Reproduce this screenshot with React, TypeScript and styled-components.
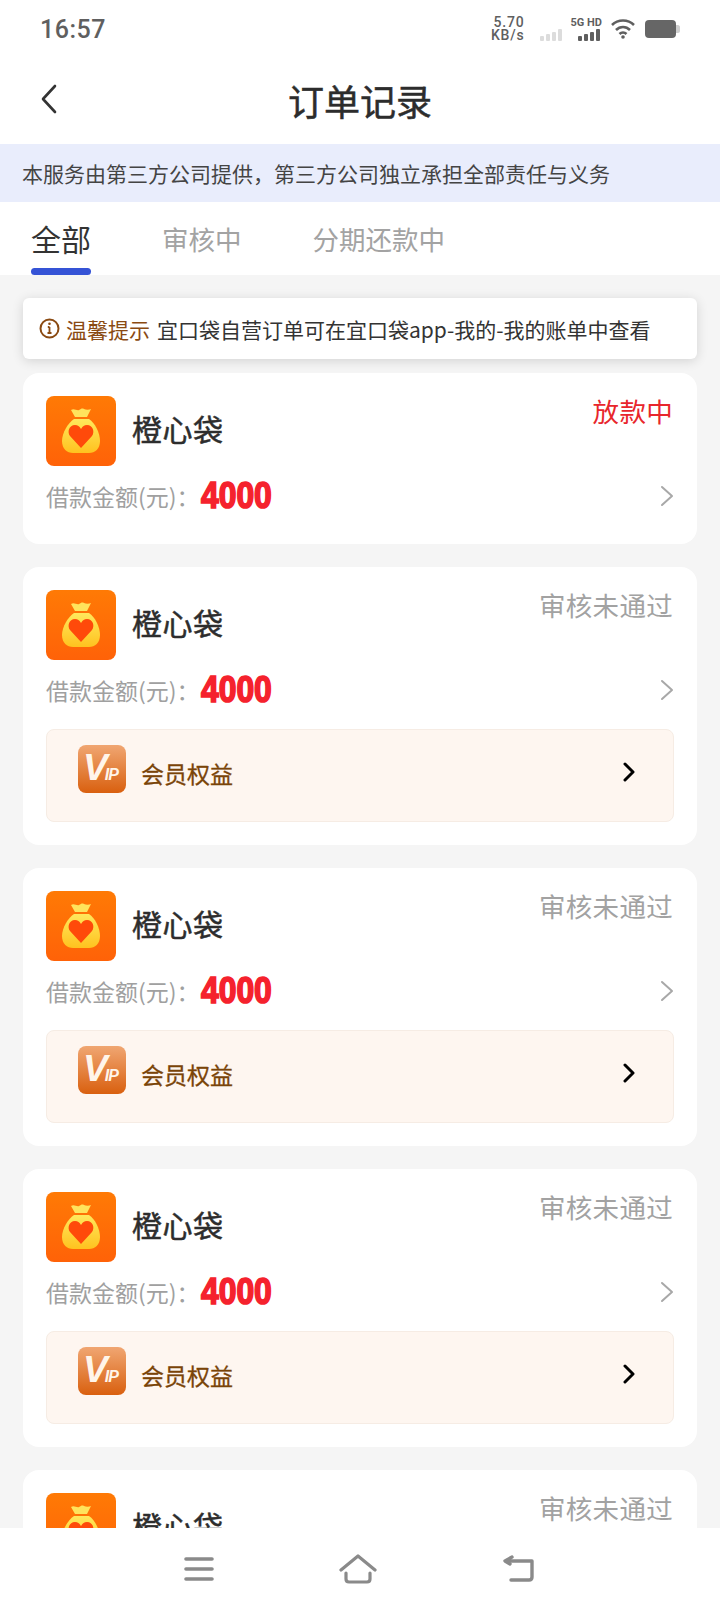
import React from "react";
import styled, { createGlobalStyle } from "styled-components";

const GlobalStyle = createGlobalStyle`
  html, body {
    margin: 0;
    padding: 0;
    background: #f5f5f5;
    font-family: "Noto Sans CJK SC", "Noto Sans", sans-serif;
  }
`;

const Page = styled.div`
  position: relative;
  width: 720px;
  height: 1612px;
  overflow: hidden;
  background: #f5f5f5;
`;
const StatusBar = styled.div`
  height: 58px;
  background: white;
  padding: 0 40px;
  display: flex;
  justify-content: space-between;
  align-items: center;
  box-sizing: border-box;
`;
const Clock = styled.div`
  font-family: Roboto, sans-serif;
  font-size: 25px;
  font-weight: 500;
  letter-spacing: 0.5px;
  color: #5f5f5f;
`;
const StatusIcons = styled.div`
  display: flex;
  align-items: center;
  color: #5f5f5f;
`;
const Speed = styled.div`
  font-family: Roboto, sans-serif;
  font-size: 14px;
  line-height: 13px;
  text-align: right;
  letter-spacing: 0.8px;
  font-weight: 500;
  margin-right: 15px;
`;
const DimSignal = styled.svg`
  margin-top: 11px;
`;
const SignalBox = styled.div`
  display: flex;
  flex-direction: column;
  align-items: flex-end;
  margin-left: 7px;
  margin-right: 9px;
`;
const SignalLabel = styled.div`
  font-family: Roboto, sans-serif;
  font-size: 11px;
  line-height: 12px;
  font-weight: 700;
  white-space: nowrap;
`;
const Battery = styled.svg`
  margin-left: 9px;
`;
const Header = styled.div`
  position: relative;
  height: 86px;
  background: white;
  display: flex;
  align-items: center;
  justify-content: center;
`;
const BackIcon = styled.svg`
  position: absolute;
  left: 40px;
  top: 26px;
`;
const Title = styled.div`
  font-size: 36px;
  font-weight: 400;
  -webkit-text-stroke: 0.5px #2c2c2c;
  color: #2c2c2c;
  line-height: 48px;
  margin-top: -3px;
`;
const Banner = styled.div`
  height: 58px;
  background: #e9edfc;
  color: #444;
  font-size: 21px;
  line-height: 58px;
  padding-left: 22px;
`;
const Tabs = styled.div`
  height: 73px;
  background: white;
  display: flex;
  padding-left: 31px;
  gap: 71px;
`;
const Tab = styled.div<{ $active?: boolean }>`
  position: relative;
  font-size: ${(p) => (p.$active ? "30px" : "26.500px")};
  line-height: 73px;
  height: 73px;
  color: ${(p) => (p.$active ? "#333" : "#a3a3a3")};
  &::after {
    content: "";
    display: ${(p) => (p.$active ? "block" : "none")};
    position: absolute;
    left: 0;
    right: 0;
    bottom: 0;
    height: 7px;
    border-radius: 4px;
    background: #3553d6;
  }
`;
const Content = styled.div`
  padding: 23px 23px 0;
  display: flex;
  flex-direction: column;
`;
const Notice = styled.div`
  height: 61px;
  background: white;
  border-radius: 6px;
  box-shadow: 0 2px 12px rgba(0, 0, 0, 0.14);
  display: flex;
  align-items: center;
  padding-left: 16px;
  font-size: 21px;
  color: #333;
  white-space: nowrap;
  margin-bottom: 14px;
`;
const NoticeLabel = styled.span`
  color: #8a4a12;
  margin: 0 7px 0 6px;
`;
const Card = styled.div<{ $vip?: boolean }>`
  background: white;
  border-radius: 16px;
  padding: 23px 23px ${(p) => (p.$vip ? "23px" : "28px")};
  margin-bottom: 23px;
`;
const CardTop = styled.div`
  display: flex;
  align-items: flex-start;
`;
const LogoBox = styled.svg`
  width: 70px;
  height: 70px;
  flex: none;
`;
const Name = styled.div`
  font-size: 30px;
  font-weight: 400;
  -webkit-text-stroke: 0.5px #2d2d2d;
  color: #2d2d2d;
  line-height: 64px;
  margin-left: 16px;
  flex: 1;
  letter-spacing: 0.5px;
`;
const Status = styled.div<{ $red?: boolean }>`
  font-size: 26.500px;
  line-height: 32px;
  letter-spacing: 0.3px;
  margin-top: -1px;
  margin-right: 1px;
  color: ${(p) => (p.$red ? "#e8262c" : "#a2a2a2")};
`;
const AmountRow = styled.div`
  display: flex;
  align-items: center;
  height: 40px;
  margin-top: 10px;
`;
const AmountLabel = styled.span`
  font-size: 23px;
  color: #a0a0a0;
`;
const Amount = styled.span`
  font-family: "Liberation Sans", sans-serif;
  font-size: 37px;
  font-weight: 700;
  color: #f5222d;
  -webkit-text-stroke: 1.700px #f5222d;
  margin-left: 1px;
  flex: 1;
  transform: scaleX(0.86);
  transform-origin: left center;
`;
const Chevron = styled.svg`
  flex: none;
`;
const VipChevron = styled.svg`
  flex: none;
  margin-bottom: 7px;
`;
const Vip = styled.div`
  height: 93px;
  margin: 19px 0 0;
  box-sizing: border-box;
  background: #fef6f0;
  border: 1px solid #f6ece4;
  border-radius: 8px;
  display: flex;
  align-items: center;
  padding: 0 37px 0 31px;
`;
const VipBadge = styled.div`
  width: 48px;
  height: 48px;
  box-sizing: border-box;
  padding-left: 5px;
  border-radius: 8px;
  background: linear-gradient(180deg, #f0a672, #d9600f);
  flex: none;
  color: #fff5ea;
  font-family: "Liberation Sans", sans-serif;
  font-style: italic;
  font-weight: 700;
  display: flex;
  align-items: baseline;
  line-height: 46px;
  overflow: hidden;
  margin-top: -13px;
`;
const VipBig = styled.span`
  font-size: 37px;
  letter-spacing: -3px;
`;
const VipSmall = styled.span`
  font-size: 16px;
  letter-spacing: -1px;
`;
const VipText = styled.div`
  font-size: 23px;
  font-weight: 400;
  -webkit-text-stroke: 0.3px #7a4408;
  color: #7a4408;
  margin: 0 0 6px 15px;
  flex: 1;
`;
const NavBar = styled.div`
  position: absolute;
  left: 0;
  right: 0;
  bottom: 0;
  height: 84px;
  background: white;
  display: flex;
  justify-content: center;
  align-items: center;
  padding-bottom: 2px;
  box-sizing: border-box;
  gap: 125px;
`;

function Logo() {
  return (
    <LogoBox viewBox="0 0 70 70">
      <defs>
        <linearGradient id="logoBg" x1="0" y1="0" x2="0" y2="1">
          <stop offset="0" stopColor="#ff7a05" />
          <stop offset="1" stopColor="#ff6208" />
        </linearGradient>
        <linearGradient id="logoBag" x1="0" y1="0" x2="0" y2="1">
          <stop offset="0" stopColor="#ffe85c" />
          <stop offset="1" stopColor="#ffc21f" />
        </linearGradient>
      </defs>
      <rect width="70" height="70" rx="8" fill="url(#logoBg)" />
      <path d="M25 14c3-2 6 1 8 0s3-2 5-1 5 1 7 0l-4 8H29z" fill="#ffe35c" />
      <path d="M28 23h15c6 4 11 14 11 22 0 8-5 12-11 12H27c-6 0-11-4-11-12 0-8 6-18 12-22z" fill="url(#logoBag)" />
      <path d="M35 52L24 40c-3-4-1-11 5-11 3 0 4 1 6 4 2-3 3-4 6-4 6 0 8 7 5 11z" fill="#ff4a0a" />
    </LogoBox>
  );
}

const RowChevron = () => (
  <Chevron width="14" height="22" viewBox="0 0 14 22" fill="none" stroke="#a8a8a8" strokeWidth="2" strokeLinecap="round" strokeLinejoin="round">
    <path d="M2 2l10 9-10 9" />
  </Chevron>
);

function OrderCard({ status, red, vip }: { status: string; red?: boolean; vip?: boolean }) {
  return (
    <Card $vip={vip}>
      <CardTop>
        <Logo />
        <Name>橙心袋</Name>
        <Status $red={red}>{status}</Status>
      </CardTop>
      <AmountRow>
        <AmountLabel>借款金额(元)：</AmountLabel>
        <Amount>4000</Amount>
        <RowChevron />
      </AmountRow>
      {vip && (
        <Vip>
          <VipBadge>
            <VipBig>V</VipBig>
            <VipSmall>IP</VipSmall>
          </VipBadge>
          <VipText>会员权益</VipText>
          <VipChevron width="14" height="20" viewBox="0 0 14 20" fill="none" stroke="#000" strokeWidth="3" strokeLinecap="round" strokeLinejoin="round">
            <path d="M3 2l8 8-8 8" />
          </VipChevron>
        </Vip>
      )}
    </Card>
  );
}

export default function App() {
  return (
    <Page>
      <GlobalStyle />
      <StatusBar>
        <Clock>16:57</Clock>
        <StatusIcons>
          <Speed>
            5.70
            <br />
            KB/s
          </Speed>
          <DimSignal width="24" height="12" viewBox="0 0 24 12" fill="#dcdcdc">
            <rect x="0" y="7" width="4" height="5" rx="1" />
            <rect x="6" y="5" width="4" height="7" rx="1" />
            <rect x="12" y="3" width="4" height="9" rx="1" />
            <rect x="18" y="0" width="4" height="12" rx="1" />
          </DimSignal>
          <SignalBox>
            <SignalLabel>5G HD</SignalLabel>
            <svg width="24" height="12" viewBox="0 0 24 12" fill="#5f5f5f">
              <rect x="0" y="7" width="4" height="5" rx="1" />
              <rect x="6" y="5" width="4" height="7" rx="1" />
              <rect x="12" y="3" width="4" height="9" rx="1" />
              <rect x="18" y="0" width="4" height="12" rx="1" />
            </svg>
          </SignalBox>
          <svg width="25" height="20" viewBox="0 0 25 20" fill="none" stroke="#5f5f5f" strokeWidth="2.600">
            <path d="M1 6c6-6 16-6 22 0" />
            <path d="M5 11c4-4 10-4 14 0" />
            <path d="M8.500 15c2-2 5-2 7 0" />
            <circle cx="12" cy="18" r="1.800" fill="#5f5f5f" stroke="none" />
          </svg>
          <Battery width="35" height="20" viewBox="0 0 35 20">
            <rect x="0" y="1" width="31" height="18" rx="4" fill="#666" />
            <path d="M31 6h2c1 0 2 1 2 2v4c0 1-1 2-2 2h-2z" fill="#cfcfcf" />
          </Battery>
        </StatusIcons>
      </StatusBar>
      <Header>
        <BackIcon width="18" height="30" viewBox="0 0 18 30" fill="none" stroke="#333" strokeWidth="2.600" strokeLinecap="round" strokeLinejoin="round">
          <path d="M15 2L3 15l12 13" />
        </BackIcon>
        <Title>订单记录</Title>
      </Header>
      <Banner>本服务由第三方公司提供，第三方公司独立承担全部责任与义务</Banner>
      <Tabs>
        <Tab $active>全部</Tab>
        <Tab>审核中</Tab>
        <Tab>分期还款中</Tab>
      </Tabs>
      <Content>
        <Notice>
          <svg width="21" height="21" viewBox="0 0 21 21" fill="none" stroke="#8a4a12" strokeWidth="2">
            <circle cx="10.500" cy="10.500" r="9" />
            <path d="M10.500 9v6M8.500 15h4M8.800 9h1.700" strokeWidth="1.800" />
            <circle cx="10.500" cy="5.800" r="1.300" fill="#8a4a12" stroke="none" />
          </svg>
          <NoticeLabel>温馨提示</NoticeLabel>
          宜口袋自营订单可在宜口袋app-我的-我的账单中查看
        </Notice>
        <OrderCard status="放款中" red />
        <OrderCard status="审核未通过" vip />
        <OrderCard status="审核未通过" vip />
        <OrderCard status="审核未通过" vip />
        <OrderCard status="审核未通过" vip />
      </Content>
      <NavBar>
        <svg width="30" height="26" viewBox="0 0 30 26" fill="none" stroke="#8a8a8a" strokeWidth="3.600" strokeLinecap="round">
          <path d="M2 3h26M2 13h26M2 23h26" />
        </svg>
        <svg width="38" height="30" viewBox="0 0 38 30" fill="none" stroke="#8a8a8a" strokeWidth="3.200" strokeLinecap="round" strokeLinejoin="round">
          <path d="M2 16L19 2l17 14" />
          <path d="M7 19v6c0 2 1 3 3 3h18c2 0 3-1 3-3v-6" />
        </svg>
        <svg width="34" height="28" viewBox="0 0 34 28" fill="none" stroke="#8a8a8a" strokeWidth="3.400" strokeLinecap="round" strokeLinejoin="round">
          <path d="M5 6h25v16c0 2-1 3-3 3H9" />
          <path d="M10 2L3 6l5 3" fill="#8a8a8a" />
        </svg>
      </NavBar>
    </Page>
  );
}
